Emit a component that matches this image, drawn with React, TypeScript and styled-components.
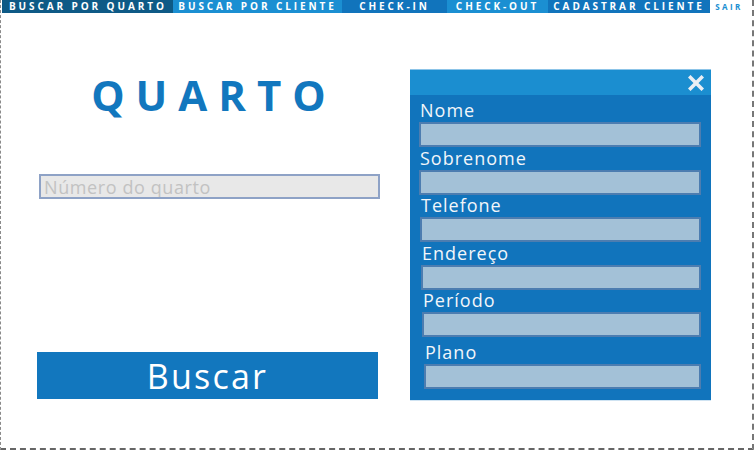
import React from "react";
import styled, { createGlobalStyle } from "styled-components";

const GlobalStyle = createGlobalStyle`
  html, body { margin: 0; padding: 0; background: #ffffff; }
  body { font-family: "Open Sans", "Noto Sans", sans-serif; }
  * { box-sizing: border-box; }
`;

const Frame = styled.div`
  width: 754px;
  height: 450px;
  border-left: 1px dashed #8a8a8a;
  border-right: 2px dashed #777777;
  border-bottom: 2px dashed #666666;
  display: flex;
  flex-direction: column;
  background: #ffffff;
`;

const Nav = styled.nav`
  display: flex;
  height: 13px;
  margin-left: 1px;
`;

const Tab = styled.div<{ $bg: string; $w: number; $color?: string; $size?: number; $left?: boolean }>`
  width: ${(p) => p.$w}px;
  height: 13px;
  background: ${(p) => p.$bg};
  color: ${(p) => p.$color || "#ffffff"};
  display: flex;
  align-items: center;
  justify-content: ${(p) => (p.$left ? "flex-start" : "center")};
  padding-left: ${(p) => (p.$left ? "7px" : "0")};
  font-family: "Open Sans", "Noto Sans", sans-serif;
  font-weight: 700;
  font-size: ${(p) => p.$size || 10}px;
  letter-spacing: ${(p) => ((p.$size || 10) < 10 ? 2.4 : 2.9)}px;
  line-height: 13px;
  white-space: nowrap;
`;

const Content = styled.div`
  display: flex;
  flex: 1;
`;

const LeftCol = styled.div`
  margin-left: 36px;
  width: 343px;
  display: flex;
  flex-direction: column;
`;

const Title = styled.h1`
  margin: 61px 0 0 0;
  font-family: "Open Sans", "Noto Sans", sans-serif;
  font-weight: 700;
  font-size: 42px;
  line-height: 42px;
  letter-spacing: 11px;
  color: #1277be;
  text-align: center;
  padding-left: 11px;
`;

const RoomInput = styled.input`
  margin: 58px 0 0 2px;
  width: 341px;
  height: 25px;
  background: #e8e8e8;
  border: 2px solid #8ea2c6;
  padding: 0 3px;
  font-family: "Open Sans", "Noto Sans", sans-serif;
  font-size: 18px;
  letter-spacing: 0.6px;
  color: #555;
  outline: none;
  &::placeholder { color: #c2c2c2; }
`;

const SearchButton = styled.button`
  margin-top: 153px;
  width: 341px;
  height: 47px;
  background: #1277be;
  border: none;
  color: #ffffff;
  font-family: "Open Sans", "Noto Sans", sans-serif;
  font-size: 34px;
  letter-spacing: 2.2px;
  padding: 0;
  cursor: pointer;
`;

const Panel = styled.section`
  margin: 56px 0 0 30px;
  width: 301px;
  height: 332px;
  background: #1174bc;
  border-bottom: 1px solid #cfe3f2;
  display: flex;
  flex-direction: column;
`;

const PanelHeader = styled.div`
  height: 26px;
  background: #1b8ed0;
  border-top: 1px solid #8cc4e8;
  display: flex;
  justify-content: flex-end;
  align-items: center;
  padding-right: 7px;
`;

const PanelBody = styled.div`
  display: flex;
  flex-direction: column;
  padding: 5px 10px 0 9px;
`;

const Field = styled.div<{ $top: number; $indent: number }>`
  display: flex;
  flex-direction: column;
  margin-top: ${(p) => p.$top}px;
  margin-left: ${(p) => p.$indent}px;
`;

const Label = styled.label`
  font-family: "Open Sans", "Noto Sans", sans-serif;
  font-size: 18px;
  line-height: 20px;
  letter-spacing: 1px;
  color: #f2f6fa;
  padding-left: 1px;
`;

const FieldInput = styled.input`
  margin-top: 2px;
  height: 25px;
  background: #a3c1d7;
  border: 2px solid #4d7db0;
  outline: none;
  padding: 0 4px;
`;

const fields = [
  { label: "Nome", top: 0, indent: 0 },
  { label: "Sobrenome", top: 1, indent: 0 },
  { label: "Telefone", top: 0, indent: 1 },
  { label: "Endereço", top: 1, indent: 2 },
  { label: "Período", top: 0, indent: 3 },
  { label: "Plano", top: 5, indent: 5 },
];

const CloseIcon = () => (
  <svg width="16" height="16" viewBox="0 0 16 16">
    <path d="M2.5 2.5 L13.5 13.5 M13.5 2.5 L2.5 13.5" stroke="#e9eef4" strokeWidth="3.6" strokeLinecap="square" />
  </svg>
);

export default function App() {
  return (
    <>
      <GlobalStyle />
      <Frame>
        <Nav>
          <Tab $bg="#0e5a86" $w={171} $left>BUSCAR POR QUARTO</Tab>
          <Tab $bg="#1b8fd2" $w={169}>BUSCAR POR CLIENTE</Tab>
          <Tab $bg="#1174bc" $w={105}>CHECK-IN</Tab>
          <Tab $bg="#1b8fd2" $w={101}>CHECK-OUT</Tab>
          <Tab $bg="#1174bc" $w={162}>CADASTRAR CLIENTE</Tab>
          <Tab $bg="#ffffff" $w={38} $color="#1b8fd2" $size={8}>SAIR</Tab>
        </Nav>
        <Content>
          <LeftCol>
            <Title>QUARTO</Title>
            <RoomInput placeholder="Número do quarto" />
            <SearchButton>Buscar</SearchButton>
          </LeftCol>
          <Panel>
            <PanelHeader>
              <CloseIcon />
            </PanelHeader>
            <PanelBody>
              {fields.map((f) => (
                <Field key={f.label} $top={f.top} $indent={f.indent}>
                  <Label>{f.label}</Label>
                  <FieldInput />
                </Field>
              ))}
            </PanelBody>
          </Panel>
        </Content>
      </Frame>
    </>
  );
}
